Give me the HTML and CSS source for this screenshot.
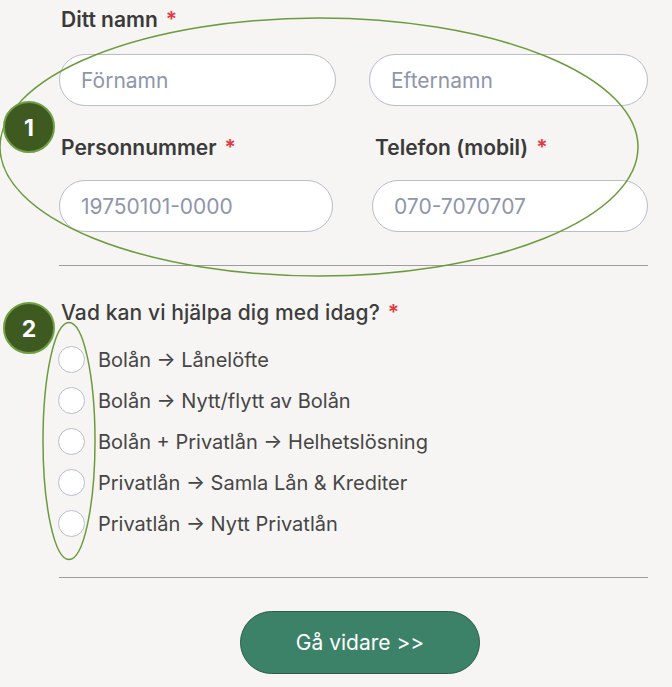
FILE: index.html
```html
<!DOCTYPE html>
<html lang="sv">
<head>
<meta charset="utf-8">
<title>Formulär</title>
<link rel="stylesheet" href="styles.css">
</head>
<body>
<div class="page">
  <form class="form">
    <div class="label name-label">Ditt namn<span class="req">*</span></div>
    <div class="row row-name">
      <input class="field" type="text" placeholder="Förnamn">
      <input class="field" type="text" placeholder="Efternamn">
    </div>
    <div class="row row-contact">
      <div class="col">
        <div class="label">Personnummer<span class="req">*</span></div>
        <input class="field" type="text" placeholder="19750101-0000">
      </div>
      <div class="col">
        <div class="label label-tel">Telefon (mobil)<span class="req">*</span></div>
        <input class="field" type="text" placeholder="070-7070707">
      </div>
    </div>
    <hr class="divider divider-top">
    <div class="question">Vad kan vi hjälpa dig med idag?<span class="req">*</span></div>
    <div class="options">
      <label class="option"><input type="radio" name="help" class="radio"><span>Bolån → Lånelöfte</span></label>
      <label class="option"><input type="radio" name="help" class="radio"><span>Bolån → Nytt/flytt av Bolån</span></label>
      <label class="option"><input type="radio" name="help" class="radio"><span>Bolån + Privatlån → Helhetslösning</span></label>
      <label class="option"><input type="radio" name="help" class="radio"><span>Privatlån → Samla Lån &amp; Krediter</span></label>
      <label class="option"><input type="radio" name="help" class="radio"><span>Privatlån → Nytt Privatlån</span></label>
    </div>
    <hr class="divider divider-bottom">
    <div class="actions">
      <button type="button" class="submit">Gå vidare &gt;&gt;</button>
    </div>
  </form>

  <svg class="annotations" width="672" height="687" viewBox="0 0 672 687" aria-hidden="true">
    <ellipse cx="319" cy="147" rx="319" ry="129" fill="none" stroke="#6c9b3e" stroke-width="1.5"/>
    <ellipse cx="69" cy="441" rx="26" ry="118.5" fill="none" stroke="#6c9b3e" stroke-width="1.5"/>
    <g class="badge">
      <circle cx="29" cy="127" r="25" fill="#3e5a20" stroke="#6f9f43" stroke-width="2"/>
      <text x="29" y="135.5" text-anchor="middle">1</text>
    </g>
    <g class="badge">
      <circle cx="29" cy="328" r="25" fill="#3e5a20" stroke="#6f9f43" stroke-width="2"/>
      <text x="29" y="336.5" text-anchor="middle">2</text>
    </g>
  </svg>
</div>
</body>
</html>
```
FILE: styles.css
```css
* { box-sizing: border-box; }

html, body {
  margin: 0;
  padding: 0;
  background: #f6f5f3;
}

body {
  font-family: Inter, "Noto Sans", "Liberation Sans", sans-serif;
  color: #3b3b3b;
  width: 672px;
  height: 687px;
  overflow: hidden;
}

.page {
  position: relative;
  width: 672px;
  height: 687px;
}

.form {
  padding: 8px 24px 0 59px;
  margin: 0;
}

.label {
  font-size: 21px;
  line-height: 24px;
  font-weight: 600;
  color: #3a3a3a;
  padding-left: 2px;
}

.req {
  color: #e2393f;
  margin-left: 8px;
  font-weight: 600;
}

.row {
  display: grid;
}

.row-name {
  grid-template-columns: 277px 279px;
  column-gap: 33px;
  margin-top: 22px;
}

.row-contact {
  grid-template-columns: 274px 276px;
  column-gap: 39px;
  margin-top: 30px;
}

.col {
  display: flex;
  flex-direction: column;
}

.col .field {
  margin-top: 20px;
}

.label-tel {
  padding-left: 3px;
}

.field {
  display: block;
  width: 100%;
  height: 52px;
  border: 1px solid #b9bdca;
  border-radius: 26px;
  background: #ffffff;
  padding: 0 20px 0 21px;
  font-family: Inter, "Noto Sans", "Liberation Sans", sans-serif;
  font-size: 21px;
  color: #3b3b3b;
  outline: none;
}

.field::placeholder {
  color: #8e96ab;
  opacity: 1;
}

.divider {
  border: 0;
  border-top: 1px solid #9d9d9d;
  margin: 0;
  width: 589px;
}

.divider-top {
  margin-top: 33px;
}

.question {
  margin-top: 35px;
  font-size: 21px;
  line-height: 24px;
  font-weight: 500;
  letter-spacing: 0.1px;
  color: #3d3d3d;
  padding-left: 2px;
}

.options {
  margin-top: 14px;
  display: flex;
  flex-direction: column;
}

.option {
  display: flex;
  align-items: center;
  height: 41px;
  gap: 13px;
  font-size: 20px;
  color: #464646;
  margin-left: -1px;
}

.radio {
  appearance: none;
  -webkit-appearance: none;
  width: 27px;
  height: 27px;
  margin: 0;
  border: 1px solid #b9bdca;
  border-radius: 50%;
  background: #ffffff;
  flex: none;
}

.divider-bottom {
  margin-top: 33px;
}

.actions {
  display: flex;
  margin-top: 33px;
  padding-left: 181px;
}

.submit {
  width: 240px;
  height: 63px;
  border-radius: 32px;
  border: 1px solid #2c5e48;
  background: #3b8268;
  color: #ffffff;
  font-family: Inter, "Noto Sans", "Liberation Sans", sans-serif;
  font-size: 21px;
  font-weight: 400;
  padding: 0;
}

.annotations {
  position: absolute;
  top: 0;
  left: 0;
  pointer-events: none;
}

.badge text {
  font-family: Inter, "Noto Sans", "Liberation Sans", sans-serif;
  font-size: 23px;
  font-weight: 700;
  fill: #ffffff;
}
```
